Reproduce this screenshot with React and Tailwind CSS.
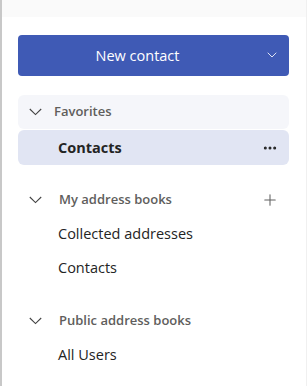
import { ChevronDown, Plus, MoreHorizontal } from 'lucide-react';

const font = { fontFamily: '"Segoe UI", "Open Sans", "Noto Sans", sans-serif' };

function Chevron({ className }) {
  return (
    <svg width="13" height="8" viewBox="0 0 13 8" className={className}>
      <polyline points="0.8,1 6.5,6.6 12.2,1" fill="none" stroke="currentColor" strokeWidth="1.1" />
    </svg>
  );
}

function SectionHeader({ title, action, textPad = 'ml-[17px]' }) {
  return (
    <div className="flex items-center h-[34px] pl-[11px] pr-[10px]">
      <Chevron className="text-[#424242] shrink-0" />
      <span className={`${textPad} flex-1 text-[13px] font-semibold text-[#605e5c]`}>{title}</span>
      {action}
    </div>
  );
}

function Item({ label }) {
  return (
    <div className="flex items-center h-[34px] pl-[40px] text-[14.5px] text-[#242424]">{label}</div>
  );
}

export default function App() {
  return (
    <div className="w-[307px] h-[386px] bg-white border-l-2 border-[#c8c8c8] overflow-hidden" style={font}>
      <div className="h-[17px] bg-[#fafafa] border-r border-[#f0f0f0]" />
      <div className="h-[369px] border-r border-[#f0f0f0] pl-[16px] pr-[16px] pt-[18px]">
        <button className="w-[271px] h-[41px] rounded-[4px] bg-[#3f5ab5] text-white flex items-center relative">
          <span className="flex-1 text-center text-[14.5px] pr-[32px]">New contact</span>
          <ChevronDown size={16} strokeWidth={1.25} className="absolute right-[9px] top-[12px]" />
        </button>

        <div className="mt-[19px] w-[271px]">
          <div className="bg-[#f5f6fa] rounded-[6px]">
            <SectionHeader title="Favorites" textPad="ml-[12px]" />
          </div>
          <div className="mt-[1px] h-[35px] bg-[#e1e5f3] rounded-[6px] flex items-center pl-[40px] pr-[11px]">
            <span className="flex-1 text-[14.5px] font-bold text-[#242424]">Contacts</span>
            <MoreHorizontal size={16} strokeWidth={2.5} className="text-[#242424]" />
          </div>

          <div className="mt-[18px]">
            <SectionHeader
              title="My address books"
              action={<Plus size={18} strokeWidth={1.4} className="text-[#616161]" />}
            />
            <Item label="Collected addresses" />
            <Item label="Contacts" />
          </div>

          <div className="mt-[19px]">
            <SectionHeader title="Public address books" />
            <Item label="All Users" />
          </div>
        </div>
      </div>
    </div>
  );
}
